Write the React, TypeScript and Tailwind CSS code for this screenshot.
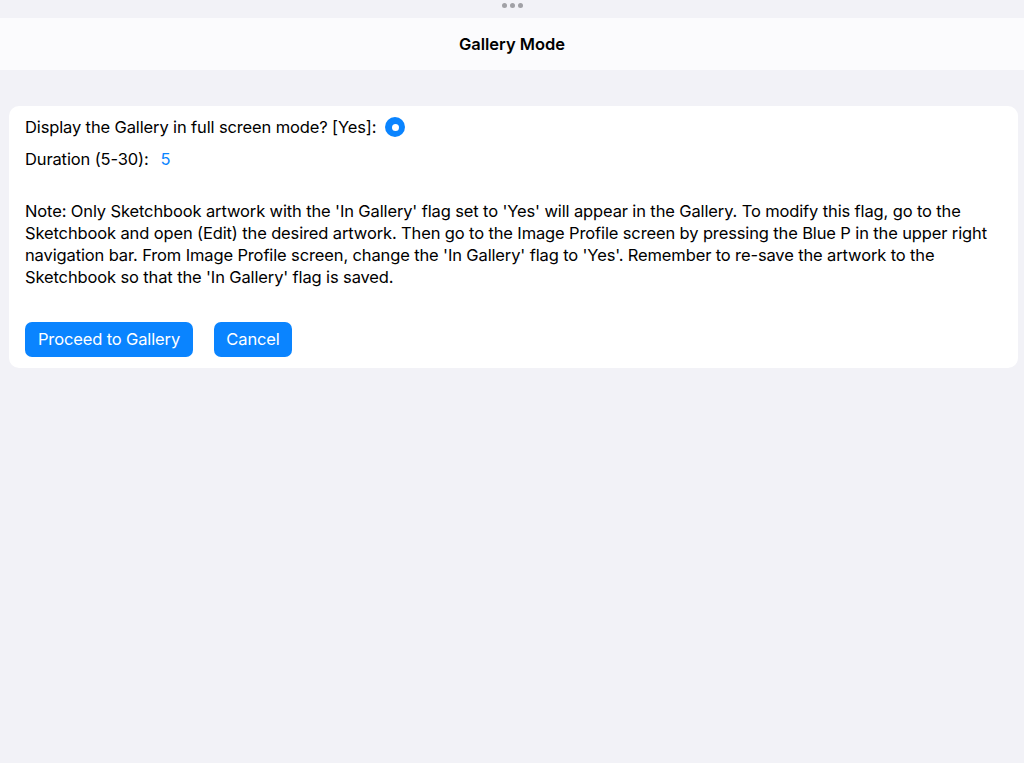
export default function App() {
  return (
    <main
      className="flex min-h-[763px] flex-col bg-[#f2f2f7] text-black"
      style={{ fontFamily: 'Inter, "Liberation Sans", sans-serif' }}
    >
      <div className="flex h-[18px] justify-center gap-[3px] pt-[3px]">
        <span className="h-[5px] w-[5px] rounded-full bg-[#a1a1a6]" />
        <span className="h-[5px] w-[5px] rounded-full bg-[#a1a1a6]" />
        <span className="h-[5px] w-[5px] rounded-full bg-[#a1a1a6]" />
      </div>

      <header className="flex h-[52px] items-center justify-center bg-[#fbfbfd]">
        <h1 className="text-[16.5px] font-semibold">Gallery Mode</h1>
      </header>

      <section className="mt-[36px] mr-[6px] ml-[9px] rounded-[10px] bg-white px-4 pt-[10px] pb-[11px] text-[16.5px] tracking-[-0.13px]">
        <div className="flex h-[22px] items-center">
          <span>Display the Gallery in full screen mode? [Yes]:</span>
          <span className="ml-[9px] flex h-[20px] w-[20px] items-center justify-center rounded-full bg-[#0a84ff]">
            <span className="h-[7px] w-[7px] rounded-full bg-white" />
          </span>
        </div>

        <div className="mt-[10px] flex h-[22px] items-center">
          <span>Duration (5-30):</span>
          <span className="ml-[12px] text-[#0a84ff]">5</span>
        </div>

        <p className="mt-[30px] leading-[22px]">
          Note: Only Sketchbook artwork with the 'In Gallery' flag set to 'Yes' will appear in the Gallery. To modify this flag, go to the
          Sketchbook and open (Edit) the desired artwork. Then go to the Image Profile screen by pressing the Blue P in the upper right
          navigation bar. From Image Profile screen, change the 'In Gallery' flag to 'Yes'. Remember to re-save the artwork to the
          Sketchbook so that the 'In Gallery' flag is saved.
        </p>

        <div className="mt-[34px] flex gap-[21px]">
          <button className="h-[35px] w-[168px] rounded-[7px] bg-[#0a84ff] text-white">
            Proceed to Gallery
          </button>
          <button className="h-[35px] w-[78px] rounded-[7px] bg-[#0a84ff] text-white">
            Cancel
          </button>
        </div>
      </section>
    </main>
  )
}
